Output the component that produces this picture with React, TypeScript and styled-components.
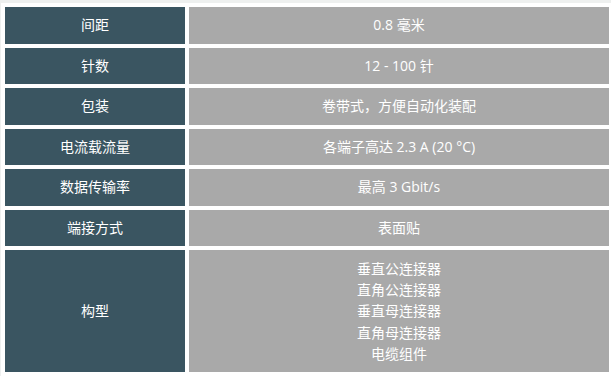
import React from "react"
import styled, { createGlobalStyle } from "styled-components"

const GlobalStyle = createGlobalStyle`
html, body {
    margin: 0;
    padding: 0;
    background: #eef0ef;
    overflow: hidden;
}
`

const Page = styled.div`
    padding: 3px 0 0 1px;
`

const SpecTable = styled.table`
    width: 612px;
    background: #ffffff;
    border-collapse: separate;
    border-spacing: 4px;
    font-family: "Open Sans", "Noto Sans CJK SC", sans-serif;
    font-size: 14px;
    color: #ffffff;
`

const LabelCell = styled.th`
    width: 164px;
    background: #3a5561;
    font-weight: normal;
    text-align: center;
    vertical-align: middle;
    padding: 8px;
    line-height: 20.5px;
`

const ValueCell = styled.td`
    background: #a9a9a9;
    text-align: center;
    vertical-align: middle;
    padding: 8px;
    line-height: 20.5px;
`

const ValueLine = styled.div`
    line-height: 21.2px;
`

interface Spec {
    label: string
    values: string[]
}

const specs: Spec[] = [
    { label: "间距", values: ["0.8 毫米"] },
    { label: "针数", values: ["12 - 100 针"] },
    { label: "包装", values: ["卷带式，方便自动化装配"] },
    { label: "电流载流量", values: ["各端子高达 2.3 A (20 °C)"] },
    { label: "数据传输率", values: ["最高 3 Gbit/s"] },
    { label: "端接方式", values: ["表面贴"] },
    {
        label: "构型",
        values: ["垂直公连接器", "直角公连接器", "垂直母连接器", "直角母连接器", "电缆组件"],
    },
]

export const App: React.FunctionComponent = () => {
    return (
        <Page>
            <GlobalStyle />
            <SpecTable>
                <tbody>
                    {specs.map((spec) => (
                        <tr key={spec.label}>
                            <LabelCell>{spec.label}</LabelCell>
                            <ValueCell>
                                {spec.values.length === 1
                                    ? spec.values[0]
                                    : spec.values.map((v) => <ValueLine key={v}>{v}</ValueLine>)}
                            </ValueCell>
                        </tr>
                    ))}
                </tbody>
            </SpecTable>
        </Page>
    )
}

export default App
